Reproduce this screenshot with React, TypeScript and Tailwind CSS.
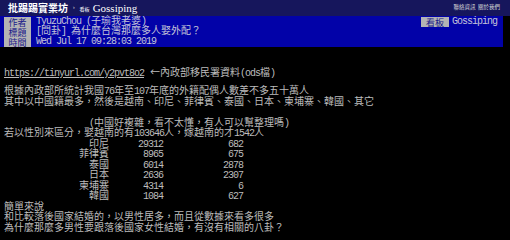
import React from "react";

// Split a line into ASCII runs (half width) and CJK runs (full width).
function M({ text }: { text: string }) {
  const parts = text.split(/([\x20-\x7E]+)/).filter((p) => p.length > 0);
  return (
    <>
      {parts.map((p, i) =>
        /^[\x20-\x7E]+$/.test(p) ? (
          <span key={i} className="tracking-[-1px] whitespace-pre">
            {p}
          </span>
        ) : (
          <span key={i}>{p}</span>
        )
      )}
    </>
  );
}

const rows: [string, string, string][] = [
  ["印尼", "29312", "682"],
  ["菲律賓", "8965", "675"],
  ["泰國", "6014", "2878"],
  ["日本", "2636", "2307"],
  ["柬埔寨", "4314", "6"],
  ["韓國", "1084", "627"],
];

const mono = "font-['Liberation_Mono','Noto_Sans_CJK_TC',monospace]";

export default function App() {
  return (
    <div className={`min-h-screen bg-black text-[#bcbcbc] ${mono} text-[10px]`}>
      {/* top bar */}
      <div className="h-[16px] bg-[#16165c] flex items-center pl-[8px] pr-[10px]">
        <span className="text-white font-bold text-[10px] font-['Noto_Sans_CJK_TC',sans-serif] leading-none">
          批踢踢實業坊
        </span>
        <span className="ml-[4px] text-[#cfcfcf] text-[6px] leading-none">›</span>
        <span className="ml-[4px] text-white text-[5px] leading-none font-['Noto_Sans_CJK_TC',sans-serif]">
          看板
        </span>
        <span className="ml-[3px] text-white text-[11px] leading-none font-['Liberation_Serif',serif]">
          Gossiping
        </span>
        <span className="ml-auto text-[#d8d8d8] text-[5.5px] leading-none font-['Noto_Sans_CJK_TC',sans-serif]">
          聯絡資訊&nbsp;&nbsp;關於我們
        </span>
      </div>

      {/* article meta */}
      <div className="w-[503px] h-[31px] bg-[#0202a8] pt-[1px] flex leading-[10px]">
        <div className="flex flex-col">
          {[
            ["作者", "TyuzuChou (子瑜我老婆)"],
            ["標題", "[問卦] 為什麼台灣那麼多人娶外配？"],
            ["時間", "Wed Jul 17 09:28:03 2019"],
          ].map(([k, v]) => (
            <div key={k} className="flex h-[10px] items-center">
              <span className="ml-[4px] w-[27px] h-[10px] flex items-center justify-center bg-[#b4b4b4] text-[#1a1a8a] text-[9px] leading-[9px] font-['Noto_Sans_CJK_TC',sans-serif]">
                {k}
              </span>
              <span className="ml-[5px] leading-[10px] text-[#c4c4d8]">
                <M text={v} />
              </span>
            </div>
          ))}
        </div>
        <div className="ml-auto mr-[6px] flex h-[10px] items-center">
          <span className="w-[28px] h-[10px] flex items-center justify-center bg-[#b4b4b4] text-[#1a1a8a] text-[9px] leading-[9px] font-['Noto_Sans_CJK_TC',sans-serif]">
            看板
          </span>
          <span className="ml-[3px] leading-[10px] text-[#c4c4d8]">
            <M text="Gossiping" />
          </span>
        </div>
      </div>

      {/* link line */}
      <div className="mt-[20px] pl-[4px] leading-[10.5px]">
        <span className="underline">
          <M text="https://tinyurl.com/y2pvt8o2" />
        </span>
        <span className="ml-[6px] font-['Noto_Sans_CJK_TC',sans-serif]">←</span>
        <M text="內政部移民署資料(ods檔)" />
      </div>

      {/* body */}
      <div className="mt-[7.5px] pl-[4px] leading-[10.5px]">
        <div>
          <M text="根據內政部所統計我國76年至107年底的外籍配偶人數差不多五十萬人" />
        </div>
        <div>
          <M text="其中以中國籍最多，然後是越南、印尼、菲律賓、泰國、日本、柬埔寨、韓國、其它" />
        </div>
        <div className="h-[10.5px]" />
        <div className="pl-[85px]">
          <M text="(中國好複雜，看不太懂，有人可以幫整理嗎)" />
        </div>
        <div>
          <M text="若以性別來區分，娶越南的有103646人，嫁越南的才1542人" />
        </div>
        {rows.map(([name, a, b]) => (
          <div key={name} className="flex">
            <span className="w-[105px] text-right">{name}</span>
            <span className="w-[54px] text-right">
              <M text={a} />
            </span>
            <span className="w-[80px] text-right">
              <M text={b} />
            </span>
          </div>
        ))}
        <div>簡單來說</div>
        <div>和比較落後國家結婚的，以男性居多，而且從數據來看多很多</div>
        <div>為什麼那麼多男性要跟落後國家女性結婚，有沒有相關的八卦？</div>
      </div>
    </div>
  );
}
